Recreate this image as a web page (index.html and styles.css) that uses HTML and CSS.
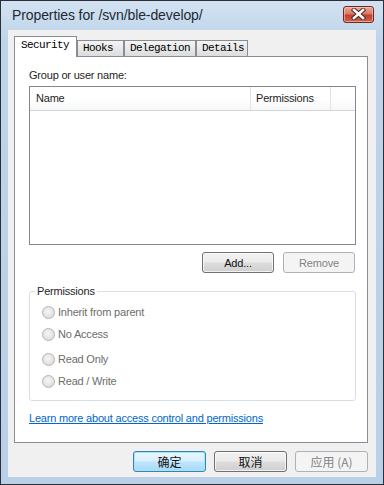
FILE: index.html
```html
<!DOCTYPE html>
<html lang="en">
<head>
<meta charset="utf-8" />
<title>Properties for /svn/ble-develop/</title>
<link rel="stylesheet" href="styles.css">
</head>
<body>
<div class="window">
  <div class="titlebar">
    <span class="title">Properties for /svn/ble-develop/</span>
    <button class="close" type="button" aria-label="Close">
      <svg width="19" height="12" viewBox="0 0 19 12">
        <path d="M5 2 L14 10 M14 2 L5 10" stroke="#4a2520" stroke-width="4.4" stroke-linecap="square" fill="none"/>
        <path d="M5 2 L14 10 M14 2 L5 10" stroke="#ffffff" stroke-width="2.6" stroke-linecap="square" fill="none"/>
      </svg>
    </button>
  </div>

  <div class="client">
    <div class="tabs">
      <div class="tab tab-security active">Security</div>
      <div class="tab tab-hooks">Hooks</div>
      <div class="tab tab-delegation">Delegation</div>
      <div class="tab tab-details">Details</div>
    </div>

    <div class="panel">
      <div class="label">Group or user name:</div>

      <div class="list">
        <div class="list-head">
          <span class="col col-name">Name</span>
          <span class="col col-perm">Permissions</span>
          <span class="col col-rest"></span>
        </div>
      </div>

      <div class="list-actions">
        <button class="btn" type="button">Add...</button>
        <button class="btn" type="button" disabled>Remove</button>
      </div>

      <fieldset class="perms">
        <legend>Permissions</legend>
        <label class="radio"><span class="dot"></span>Inherit from parent</label>
        <label class="radio"><span class="dot"></span>No Access</label>
        <label class="radio radio-gap"><span class="dot"></span>Read Only</label>
        <label class="radio"><span class="dot"></span>Read / Write</label>
      </fieldset>

      <a class="link" href="#">Learn more about access control and permissions</a>
    </div>

    <div class="dialog-actions">
      <button class="btn btn-default" type="button">确定</button>
      <button class="btn" type="button">取消</button>
      <button class="btn" type="button" disabled>应用 (A)</button>
    </div>
  </div>
</div>
</body>
</html>
```

FILE: styles.css
```css
html, body {
  margin: 0;
  background: #ffffff;
}

body {
  font-family: "Liberation Sans", Arial, sans-serif;
  font-size: 11px;
  letter-spacing: -0.2px;
  color: #1e1e1e;
}

* {
  box-sizing: border-box;
}

.window {
  width: 384px;
  height: 485px;
  border: 1px solid #2b2f36;
  background: linear-gradient(180deg, #d2e2f2 0%, #bfd4ea 40px, #bad0e8 100%);
  display: flex;
  flex-direction: column;
}

.titlebar {
  height: 29px;
  display: flex;
  align-items: center;
  padding: 0 9px 0 11px;
}

.title {
  flex: 1;
  font-family: "Liberation Sans", Arial, sans-serif;
  font-size: 14px;
  letter-spacing: -0.1px;
  color: #1e2a36;
  padding-bottom: 2px;
}

.close {
  width: 31px;
  height: 17px;
  margin-top: -3px;
  padding: 0;
  border: 1px solid #6b2a22;
  border-radius: 3px;
  background: linear-gradient(180deg, #e9a898 0%, #d97a66 45%, #c2412e 55%, #d0624b 100%);
  box-shadow: inset 0 0 0 1px rgba(255, 210, 200, 0.55);
  display: flex;
  align-items: center;
  justify-content: center;
}

.close svg {
  display: block;
}

.client {
  flex: 1;
  margin: 0 7px 7px;
  background: #f0f0f0;
  display: flex;
  flex-direction: column;
}

/* tabs */

.tabs {
  display: flex;
  align-items: flex-end;
  height: 20px;
  margin: 6px 0 0 6px;
  position: relative;
  z-index: 1;
}

.tab {
  height: 16px;
  border: 1px solid #898c95;
  border-bottom: none;
  background: linear-gradient(180deg, #f4f4f4 0%, #e6e6e6 60%, #dcdcdc 100%);
  font-family: "Liberation Mono", "Courier New", monospace;
  font-size: 11px;
  letter-spacing: -0.6px;
  line-height: 15px;
  padding-left: 5px;
  color: #000000;
}

.tab.active {
  height: 21px;
  margin-bottom: -1px;
  background: #ffffff;
  line-height: 17px;
  padding-left: 6px;
}

.tab-security { width: 63px; }
.tab-hooks { width: 47px; }
.tab-delegation { width: 72px; }
.tab-details { width: 52px; }

.panel {
  width: 354px;
  height: 387px;
  margin-left: 6px;
  border: 1px solid #898c95;
  background: #ffffff;
  display: flex;
  flex-direction: column;
  padding: 0 0 0 14px;
}

.label {
  margin-top: 12px;
  line-height: 13px;
}

.list {
  width: 327px;
  height: 159px;
  margin-top: 4px;
  border: 1px solid #828790;
  background: #ffffff;
}

.list-head {
  display: flex;
  height: 24px;
  border-bottom: 1px solid #d5d5d5;
  background: linear-gradient(180deg, #ffffff 0%, #ffffff 50%, #f6f7f8 100%);
}

.col {
  line-height: 23px;
  padding-left: 6px;
  border-right: 1px solid #e2e3e5;
}

.col-name { width: 221px; }
.col-perm { width: 80px; padding-left: 5px; }
.col-rest { flex: 1; border-right: none; }

/* buttons */

.btn {
  width: 72px;
  height: 21px;
  padding: 0;
  border: 1px solid #707070;
  border-radius: 3px;
  background: linear-gradient(180deg, #f2f2f2 0%, #ebebeb 48%, #dddddd 52%, #cfcfcf 100%);
  box-shadow: inset 0 0 0 1px rgba(255, 255, 255, 0.7);
  font-family: "Liberation Sans", Arial, "Noto Sans CJK SC", sans-serif;
  font-size: 11px;
  letter-spacing: -0.2px;
  color: #111111;
}

.btn:disabled {
  border-color: #adb2b5;
  background: #f4f4f4;
  box-shadow: none;
  color: #838383;
}

.btn-default {
  border-color: #3c7fb1;
  background: linear-gradient(180deg, #eaf6fd 0%, #d9f0fc 48%, #bee6fd 52%, #a7d9f5 100%);
  box-shadow: inset 0 0 0 1px #9de8f9;
}

.list-actions {
  display: flex;
  justify-content: flex-end;
  gap: 9px;
  width: 326px;
  margin-top: 7px;
}

.dialog-actions {
  display: flex;
  justify-content: flex-end;
  gap: 8px;
  margin: 8px 8px 0 0;
}

.dialog-actions .btn {
  width: 73px;
  font-family: "Noto Sans CJK SC", sans-serif;
  font-size: 12px;
  letter-spacing: 0;
}

/* permissions group */

.perms {
  width: 327px;
  height: 116px;
  margin: 12px 0 0;
  padding: 3px 0 0 12px;
  border: 1px solid #d5dfe5;
  border-radius: 3px;
}

.perms legend {
  padding: 0 2px;
  margin-left: -7px;
  line-height: 13px;
}

.radio {
  display: flex;
  align-items: center;
  height: 22px;
  color: #6d6d6d;
}

.radio-gap {
  margin-top: 3px;
}

.dot {
  width: 13px;
  height: 13px;
  margin-right: 3px;
  border: 1px solid #b4b4b4;
  border-radius: 50%;
  background: radial-gradient(circle at 45% 40%, #f6f6f6 0%, #e2e2e2 60%, #d4d4d4 100%);
}

.link {
  margin-top: 11px;
  line-height: 13px;
  color: #0066cc;
  align-self: flex-start;
}
```
